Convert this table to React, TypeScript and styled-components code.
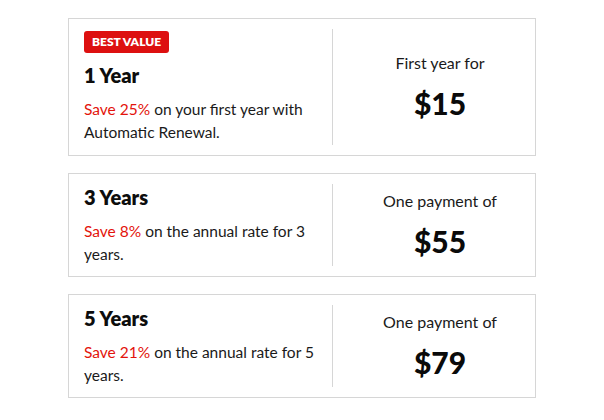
import React from "react";
import styled, { createGlobalStyle } from "styled-components";

const GlobalStyle = createGlobalStyle`
  html, body { margin: 0; padding: 0; background: #ffffff; }
  body { font-family: Lato, "Open Sans", sans-serif; color: #111111; }
`;

const Page = styled.div`
  width: 468px;
  padding: 18px 0 0 68px;
  display: flex;
  flex-direction: column;
  gap: 17px;
`;

const Card = styled.div<{ $tall?: boolean }>`
  display: flex;
  box-sizing: border-box;
  height: ${(p) => (p.$tall ? 138 : 104)}px;
  border: 1px solid #d6d6d6;
`;

const Info = styled.div`
  flex: 0 0 264px;
  box-sizing: border-box;
  margin: 10px 0;
  padding: 0 15px;
  border-right: 1px solid #d6d6d6;
  display: flex;
  flex-direction: column;
  justify-content: center;
  align-items: flex-start;
`;

const Badge = styled.span`
  display: inline-flex;
  align-items: center;
  height: 22px;
  padding: 0 8px;
  box-sizing: border-box;
  background: #dd1010;
  color: #ffffff;
  border-radius: 3px;
  font-size: 12px;
  font-weight: 800;
  margin-bottom: 10px;
`;

const Term = styled.h2`
  margin: 0 0 11px;
  font-size: 20px;
  line-height: 24px;
  font-weight: 800;
  color: #0d0d0d;
`;

const Desc = styled.p`
  margin: 0;
  font-size: 15.5px;
  line-height: 23px;
  color: #1a1a1a;
`;

const Save = styled.span`
  color: #e3130c;
`;

const PriceCol = styled.div`
  flex: 1;
  padding-left: 12px;
  display: flex;
  flex-direction: column;
  align-items: center;
  justify-content: center;
`;

const Label = styled.div`
  font-size: 16px;
  line-height: 20px;
  color: #1a1a1a;
`;

const Price = styled.div`
  margin-top: 12px;
  font-size: 30px;
  line-height: 36px;
  font-weight: 900;
  color: #0a0a0a;
`;

type Plan = {
  term: string;
  save: string;
  rest: string;
  label: string;
  price: string;
  badge?: string;
};

const plans: Plan[] = [
  {
    term: "1 Year",
    save: "Save 25%",
    rest: " on your first year with Automatic Renewal.",
    label: "First year for",
    price: "$15",
    badge: "BEST VALUE",
  },
  {
    term: "3 Years",
    save: "Save 8%",
    rest: " on the annual rate for 3 years.",
    label: "One payment of",
    price: "$55",
  },
  {
    term: "5 Years",
    save: "Save 21%",
    rest: " on the annual rate for 5 years.",
    label: "One payment of",
    price: "$79",
  },
];

export default function App() {
  return (
    <>
      <GlobalStyle />
      <Page>
        {plans.map((p) => (
          <Card key={p.term} $tall={!!p.badge}>
            <Info>
              {p.badge && <Badge>{p.badge}</Badge>}
              <Term>{p.term}</Term>
              <Desc>
                <Save>{p.save}</Save>
                {p.rest}
              </Desc>
            </Info>
            <PriceCol>
              <Label>{p.label}</Label>
              <Price>{p.price}</Price>
            </PriceCol>
          </Card>
        ))}
      </Page>
    </>
  );
}
